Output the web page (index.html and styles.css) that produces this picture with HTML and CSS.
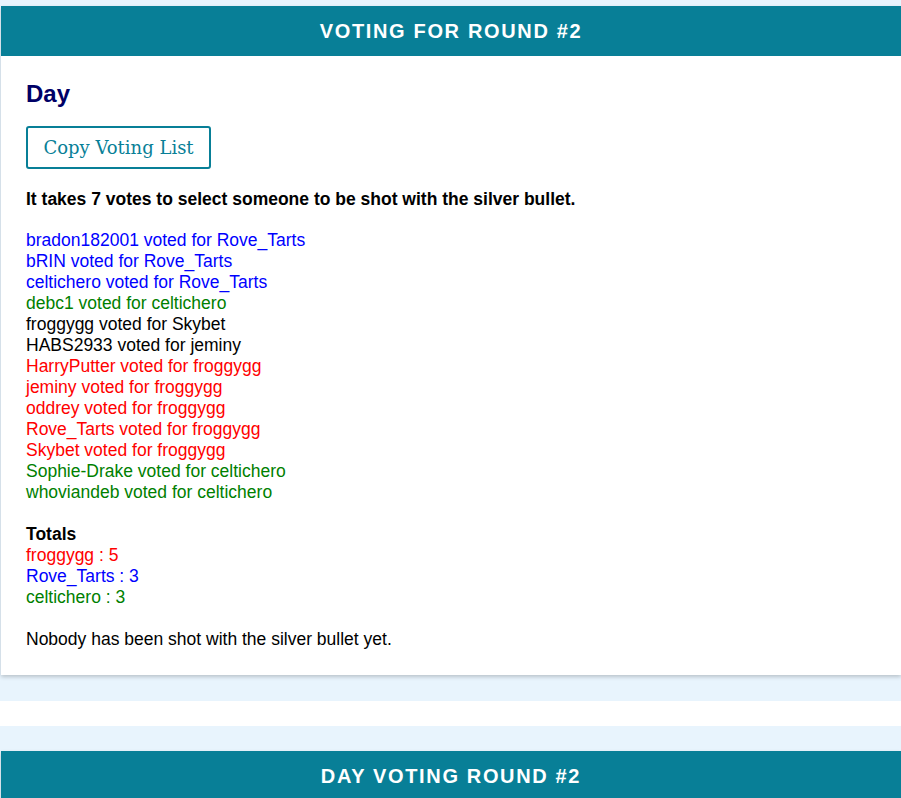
FILE: index.html
```
<!DOCTYPE html>
<html>
<head>
<meta charset="utf-8">
<link rel="stylesheet" href="styles.css">
</head>
<body>
<div class="page">
  <section class="card">
    <div class="card-header">VOTING FOR ROUND #2</div>
    <div class="card-body">
      <h2 class="phase">Day</h2>
      <button class="copy-btn">Copy Voting List</button>
      <p class="rule">It takes 7 votes to select someone to be shot with the silver bullet.</p>
      <div class="votes">
        <div class="blue">bradon182001 voted for Rove_Tarts</div>
        <div class="blue">bRIN voted for Rove_Tarts</div>
        <div class="blue">celtichero voted for Rove_Tarts</div>
        <div class="green">debc1 voted for celtichero</div>
        <div class="black">froggygg voted for Skybet</div>
        <div class="black">HABS2933 voted for jeminy</div>
        <div class="red">HarryPutter voted for froggygg</div>
        <div class="red">jeminy voted for froggygg</div>
        <div class="red">oddrey voted for froggygg</div>
        <div class="red">Rove_Tarts voted for froggygg</div>
        <div class="red">Skybet voted for froggygg</div>
        <div class="green">Sophie-Drake voted for celtichero</div>
        <div class="green">whoviandeb voted for celtichero</div>
      </div>
      <div class="totals">
        <div class="totals-title">Totals</div>
        <div class="red">froggygg : 5</div>
        <div class="blue">Rove_Tarts : 3</div>
        <div class="green">celtichero : 3</div>
      </div>
      <p class="status">Nobody has been shot with the silver bullet yet.</p>
    </div>
  </section>
  <div class="band"></div>
  <section class="card">
    <div class="card-header">DAY VOTING ROUND #2</div>
  </section>
</div>
</body>
</html>
```

FILE: styles.css
```
html, body {
  margin: 0;
  padding: 0;
}
body {
  background: #e8f4fd;
  font-family: "Liberation Sans", Arial, sans-serif;
  font-size: 17.5px;
  line-height: 21px;
  color: #000;
  overflow: hidden;
}
.page {
  padding-top: 6px;
}
.card {
  background: #fff;
  margin-left: 1px;
  box-shadow: 0 2px 4px rgba(0, 0, 0, 0.2);
}
.card-header {
  background: #087f97;
  color: #fff;
  height: 50px;
  display: flex;
  align-items: center;
  justify-content: center;
  font-weight: bold;
  font-size: 20px;
  letter-spacing: 1.65px;
}
.card-body {
  padding: 22px 25px 25px;
}
.phase {
  margin: 0;
  font-size: 24px;
  line-height: 32px;
  color: #000066;
}
.copy-btn {
  margin-top: 16px;
  width: 185px;
  height: 43px;
  background: #fff;
  border: 2px solid #087f97;
  border-radius: 3px;
  color: #087f97;
  font-family: "DejaVu Serif", Georgia, serif;
  font-size: 18px;
  padding: 0;
  display: block;
}
.rule {
  font-weight: bold;
  margin: 20px 0 0;
}
.votes {
  margin-top: 20px;
}
.totals {
  margin-top: 21px;
}
.totals-title {
  font-weight: bold;
}
.status {
  margin: 21px 0 0;
}
.blue { color: #0000ff; }
.green { color: #008000; }
.red { color: #ff0000; }
.black { color: #000; }
.band {
  margin-top: 26px;
  margin-bottom: 25px;
  height: 25px;
  background: #fff;
}
```
